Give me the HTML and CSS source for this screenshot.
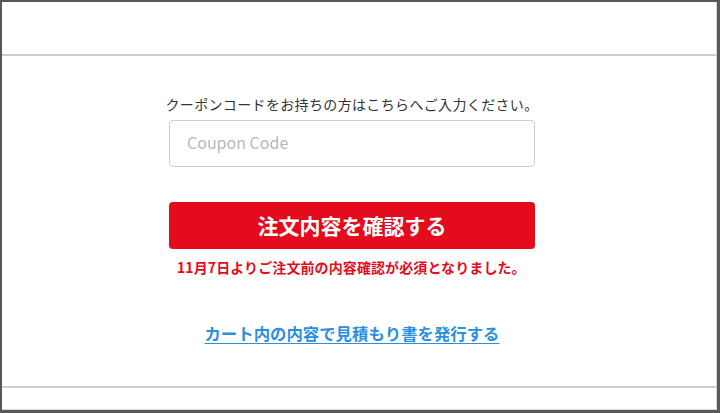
FILE: index.html
```html
<!DOCTYPE html>
<html lang="ja">
<head>
<meta charset="utf-8">
<link rel="stylesheet" href="styles.css">
</head>
<body>
<div class="frame">
  <div class="header"></div>
  <main class="main">
    <div class="column">
      <p class="lead">クーポンコードをお持ちの方はこちらへご入力ください。</p>
      <input class="coupon" type="text" placeholder="Coupon Code">
      <button class="confirm" type="button">注文内容を確認する</button>
      <p class="notice">11月7日よりご注文前の内容確認が必須となりました。</p>
      <p class="estimate"><a href="#">カート内の内容で見積もり書を発行する</a></p>
    </div>
  </main>
  <div class="footer"></div>
</div>
</body>
</html>
```
FILE: styles.css
```css
html, body {
  margin: 0;
  padding: 0;
  background: #ffffff;
}
body {
  font-family: "Noto Sans CJK JP", "Noto Sans", sans-serif;
  color: #333333;
}
.frame {
  width: 720px;
  height: 413px;
  box-sizing: border-box;
  border-style: solid;
  border-color: #585858;
  border-width: 2px 3px 3px 2px;
  display: flex;
  flex-direction: column;
  overflow: hidden;
}
.header {
  height: 52px;
  border-bottom: 2px solid #cfcfcf;
  border-right: 1px solid #d8d8d8;
  flex: none;
}
.main {
  height: 330px;
  flex: none;
  border-bottom: 2px solid #cfcfcf;
  border-right: 1px solid #d8d8d8;
}
.footer {
  flex: 1;
  border-bottom: 1px solid #d8d8d8;
  border-right: 1px solid #d8d8d8;
}
.column {
  width: 366px;
  margin-left: 167px;
  padding-top: 38px;
  display: flex;
  flex-direction: column;
}
.lead {
  margin: 0 -4px;
  font-size: 14px;
  line-height: 20px;
  text-align: center;
  color: #333333;
  letter-spacing: 0.35px;
}
.coupon {
  margin-top: 6px;
  height: 47px;
  box-sizing: border-box;
  border: 1px solid #cccccc;
  border-radius: 4px;
  padding: 0 17px 3px;
  font-family: "Noto Sans CJK JP", sans-serif;
  font-size: 16px;
  color: #333333;
  outline: none;
}
.coupon::placeholder {
  color: #b8b8b8;
}
.confirm {
  margin-top: 35px;
  height: 47px;
  border: none;
  border-radius: 4px;
  background: #e40b1d;
  color: #ffffff;
  font-family: "Noto Sans CJK JP", sans-serif;
  font-weight: bold;
  font-size: 21px;
  line-height: 47px;
  padding: 0;
  text-align: center;
}
.notice {
  margin: 8px 0 0;
  padding-left: 8px;
  font-size: 14px;
  line-height: 20px;
  font-weight: bold;
  color: #e40b1d;
  letter-spacing: 0.1px;
}
.estimate {
  margin: 45px 0 0;
  text-align: center;
  font-size: 16.4px;
  line-height: 22px;
  font-weight: bold;
}
.estimate a {
  color: #2b8fe0;
  text-decoration: underline;
  text-underline-offset: 3px;
}
```
